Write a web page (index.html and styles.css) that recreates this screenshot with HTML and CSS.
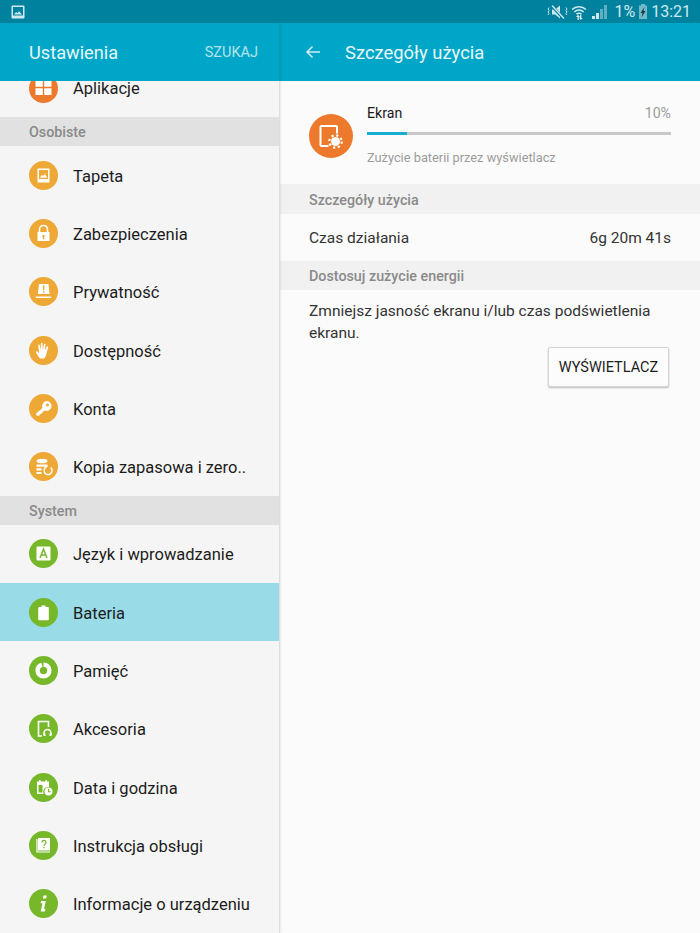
FILE: index.html
```html
<!DOCTYPE html>
<html lang="pl">
  <head>
    <meta charset="UTF-8" />
    <meta name="viewport" content="width=device-width, initial-scale=1.0" />
    <title>Ustawienia</title>
    <link rel="stylesheet" href="styles.css">
  </head>
  <body>
    <div class="status-bar">
      <svg class="status-pic" width="14" height="14" viewBox="0 0 14 14">
        <rect x="0.5" y="0.5" width="13" height="13" rx="1" fill="#cfe9ef" />
        <rect x="2" y="2" width="10" height="8.5" fill="#00829f" />
        <path d="M3 9.5l2.2-2.6 1.3 1.3 1.5-2 3 3.3z" fill="#cfe9ef" />
      </svg>
      <div class="status-right">
        <svg width="21" height="16" viewBox="0 0 21 16">
          <path d="M5 5.5h3.2L13 1.5v13L8.2 10.500H5z" fill="#cfe9ef" />
          <path d="M4 1l13 14" stroke="#00829f" stroke-width="3" />
          <path d="M5 1.500l12 13" stroke="#cfe9ef" stroke-width="1.400" />
          <path d="M2 3.500l-1 1.500 1 1.500-1 1.500 1 1.500-1 1.500M19 3.500l1 1.500-1 1.500 1 1.500-1 1.500 1 1.500" fill="none" stroke="#cfe9ef" stroke-width="1" />
        </svg>
        <svg class="wifi" width="16" height="16" viewBox="0 0 16 16">
          <path d="M1 5.500a10 10 0 0 1 14 0M3.300 8a6.800 6.800 0 0 1 9.400 0M5.500 10.300a3.500 3.500 0 0 1 5 0" fill="none" stroke="#cfe9ef" stroke-width="1.500" />
          <path d="M6.500 16v-3H5l2-2.300L9 13H7.800v3zM9.200 11h1.200v3h1.400l-2 2-1.300-1.500z" fill="#cfe9ef" />
        </svg>
        <svg class="signal" width="15" height="15" viewBox="0 0 15 15">
          <path d="M0 12h3v3H0zM4 9h3v6H4z" fill="#cfe9ef" />
          <path d="M8 5h3v10H8zM12 1h3v14h-3z" fill="#5fb0c2" />
        </svg>
        <span class="percent">1%</span>
        <svg class="batt" width="8" height="15" viewBox="0 0 8 15">
          <rect x="2" y="0" width="4" height="2" fill="#6fb9c9" />
          <rect x="0" y="1.500" width="8" height="13.500" fill="#6fb9c9" />
          <path d="M5.500 3L1.500 9h2L2.500 13.500 6.500 7h-2z" fill="#1c3a42" />
        </svg>
        <span class="clock">13:21</span>
      </div>
    </div>

    <div class="app">
      <aside class="sidebar">
        <header class="side-header">
          <span class="side-title">Ustawienia</span>
          <span class="side-search">SZUKAJ</span>
        </header>
        <div class="menu">
          <div class="row row-first">
            <span class="badge badge-orange">
              <svg viewBox="0 0 29 29"><path d="M6.500 6h7.300v6.800H6.500zM15.200 6h7.300v6.800h-7.300zM6.500 14.200h7.300V21H6.500zM15.200 14.200h7.300V21h-7.300z" fill="#fff" /></svg>
            </span>
            <span>Aplikacje</span>
          </div>
          <div class="group">Osobiste</div>
          <div class="row">
            <span class="badge badge-yellow">
              <svg viewBox="0 0 29 29"><path fill-rule="evenodd" d="M8.500 7.500h12v14h-12zM10 9v9h9V9z" fill="#fff" /><path d="M10.800 16.800l2.200-3 1.300 1.300 1.600-2 2.300 3.700z" fill="#fff" /></svg>
            </span>
            <span>Tapeta</span>
          </div>
          <div class="row">
            <span class="badge badge-yellow">
              <svg viewBox="0 0 29 29"><path d="M10.500 13v-2.500a4 4 0 0 1 8 0V13" fill="none" stroke="#fff" stroke-width="1.600" /><path fill-rule="evenodd" d="M8.500 13h12v9h-12zM14.500 16a1.200 1.200 0 0 0-.7 2.200V20h1.400v-1.800a1.200 1.200 0 0 0-.7-2.200z" fill="#fff" /></svg>
            </span>
            <span>Zabezpieczenia</span>
          </div>
          <div class="row">
            <span class="badge badge-yellow">
              <svg viewBox="0 0 29 29"><path fill-rule="evenodd" d="M10 7h9.500l1 10H8.800zM13.700 8.500l.3 4.800h1.200l.3-4.800zM13.900 14.200v1.600h1.400v-1.600z" fill="#fff" /><path d="M6.800 19.500h15.400V21H6.800z" fill="#fff" /></svg>
            </span>
            <span>Prywatność</span>
          </div>
          <div class="row">
            <span class="badge badge-yellow">
              <svg viewBox="0 0 29 29"><path d="M11 22.500c-1.500-1.500-2.500-3.500-4-6-.5-1 .7-1.800 1.500-1l1.700 2-1-8c-.1-1.100 1.300-1.300 1.500-.3l1 5 .2-6.700c0-1.100 1.600-1.100 1.600 0l.3 6.600 1.200-5.800c.2-1 1.700-.8 1.500.3l-.8 6.200 2-4c.5-1 1.800-.4 1.500.6l-2 7c-.5 1.800-1 3-2 4.100z" fill="#fff" /></svg>
            </span>
            <span>Dostępność</span>
          </div>
          <div class="row">
            <span class="badge badge-yellow">
              <svg viewBox="0 0 29 29"><path fill-rule="evenodd" d="M17.500 7a5 5 0 0 1 0 10c-.7 0-1.300-.1-1.900-.4L9.500 22 7.500 21.500 7 19.500l6.600-5.500A5 5 0 0 1 17.500 7zM18.500 9.500a1.500 1.500 0 1 0 0 3 1.500 1.500 0 0 0 0-3z" fill="#fff" /></svg>
            </span>
            <span>Konta</span>
          </div>
          <div class="row">
            <span class="badge badge-yellow">
              <svg viewBox="0 0 29 29"><ellipse cx="13" cy="9" rx="5.500" ry="2.300" fill="#fff" /><path d="M7.500 12.500h11v2.300h-11zM7.500 16.300h5v2.200h-5zM7.500 20h5v2h-5z" fill="#fff" /><path d="M21.800 15.600a4 4 0 1 1-3.500-1" fill="none" stroke="#fff" stroke-width="1.500" /></svg>
            </span>
            <span>Kopia zapasowa i zero..</span>
          </div>
          <div class="group">System</div>
          <div class="row">
            <span class="badge badge-green">
              <svg viewBox="0 0 29 29"><rect x="7.500" y="7.500" width="14" height="14" rx="1" fill="#fff" /><path d="M11 19l3.500-9 3.500 9M12.200 16h4.600" fill="none" stroke="#76b82a" stroke-width="1.500" /></svg>
            </span>
            <span>Język i wprowadzanie</span>
          </div>
          <div class="row row-active">
            <span class="badge badge-green">
              <svg viewBox="0 0 29 29"><path d="M12.500 7.500h4V9H19a.8.8 0 0 1 .8.8V21.500a.8.8 0 0 1-.8.8h-9a.8.8 0 0 1-.8-.8V9.800A.8.8 0 0 1 10 9h2.500z" fill="#fff" /></svg>
            </span>
            <span>Bateria</span>
          </div>
          <div class="row">
            <span class="badge badge-green">
              <svg viewBox="0 0 29 29"><circle cx="14.500" cy="14.500" r="5.900" fill="none" stroke="#fff" stroke-width="4.400" stroke-dasharray="34.500 2.600" transform="rotate(-90 14.500 14.500)" /></svg>
            </span>
            <span>Pamięć</span>
          </div>
          <div class="row">
            <span class="badge badge-green">
              <svg viewBox="0 0 29 29"><path d="M13 22H9.500V7.500h10V13" fill="none" stroke="#fff" stroke-width="1.600" /><path d="M15 21v-2a3.500 3.500 0 0 1 7 0v2" fill="none" stroke="#fff" stroke-width="1.500" /><path d="M14.500 19.500h2V22h-2zM20.500 19.500h2V22h-2z" fill="#fff" /></svg>
            </span>
            <span>Akcesoria</span>
          </div>
          <div class="row">
            <span class="badge badge-green">
              <svg viewBox="0 0 29 29"><path fill-rule="evenodd" d="M8 8.500h2V7h1.500v1.500h5V7H18v1.500h2V14a5 5 0 0 0-5.500 7H8zM9.500 12v7.500h4V12z" fill="#fff" /><circle cx="19.500" cy="18.500" r="4" fill="#fff" /><path d="M19.500 16v2.800h2.200" fill="none" stroke="#76b82a" stroke-width="1.100" /></svg>
            </span>
            <span>Data i godzina</span>
          </div>
          <div class="row">
            <span class="badge badge-green">
              <svg viewBox="0 0 29 29"><rect x="9" y="7" width="12" height="12.500" fill="#fff" /><path d="M8 8v13h13" fill="none" stroke="#fff" stroke-width="1.200" /><path d="M13 11.500a2 2 0 1 1 3 1.700c-.8.500-1 .9-1 1.700M15 16v1.300" fill="none" stroke="#76b82a" stroke-width="1.300" /></svg>
            </span>
            <span>Instrukcja obsługi</span>
          </div>
          <div class="row">
            <span class="badge badge-green">
              <svg viewBox="0 0 29 29"><path d="M14.500 6.500h3.300l-.6 3h-3.300zM12 12h4.800l-1.800 8h1.500l-.5 2.500h-4.300l1.800-8.200H11.600z" fill="#fff" /></svg>
            </span>
            <span>Informacje o urządzeniu</span>
          </div>
        </div>
      </aside>

      <main class="detail">
        <header class="detail-header">
          <svg class="back" width="16" height="14" viewBox="0 0 16 14">
            <path d="M15 7H2M7.500 1.500L2 7l5.500 5.500" fill="none" stroke="#cfeef5" stroke-width="1.500" />
          </svg>
          <span class="detail-title">Szczegóły użycia</span>
        </header>

        <div class="usage">
          <span class="usage-icon">
            <svg viewBox="0 0 44 44">
              <path d="M19.500 32h-7a1 1 0 0 1-1-1V13a1 1 0 0 1 1-1H27a1 1 0 0 1 1 1v6.500" fill="none" stroke="#fff" stroke-width="2" />
              <circle cx="26.500" cy="27.500" r="4.500" fill="#fff" />
              <circle cx="26.500" cy="27.500" r="6.200" fill="none" stroke="#fff" stroke-width="2.200" stroke-dasharray="2.200 2.670" />
            </svg>
          </span>
          <div class="usage-body">
            <div class="usage-top">
              <span class="usage-name">Ekran</span>
              <span class="usage-pct">10%</span>
            </div>
            <div class="bar"><div class="bar-fill" style="width: 13%"></div></div>
            <div class="usage-sub">Zużycie baterii przez wyświetlacz</div>
          </div>
        </div>

        <div class="section">Szczegóły użycia</div>
        <div class="time-row">
          <span>Czas działania</span>
          <span>6g 20m 41s</span>
        </div>
        <div class="section section-2">Dostosuj zużycie energii</div>
        <p class="tip">Zmniejsz jasność ekranu i/lub czas podświetlenia ekranu.</p>
        <div class="tip-action">
          <button class="screen-btn">WYŚWIETLACZ</button>
        </div>
      </main>
    </div>
  </body>
</html>
```

FILE: styles.css
```css
* {
  margin: 0;
  padding: 0;
  box-sizing: border-box;
  font-family: Roboto, "Liberation Sans", sans-serif;
}

html,
body {
  height: 933px;
  overflow: hidden;
}

.status-bar {
  height: 23px;
  background-color: #00829f;
  display: flex;
  justify-content: space-between;
  align-items: center;
  padding: 0 9px 0 11px;
  color: #cfe9ef;
}

.status-right {
  display: flex;
  align-items: center;
  height: 23px;
}

.wifi {
  margin-left: 3px;
}

.signal {
  margin-left: 5px;
  margin-top: -1px;
}

.percent {
  margin-left: 7px;
  font-size: 16px;
}

.batt {
  margin-left: 4px;
}

.clock {
  margin-left: 4px;
  font-size: 16px;
}

.app {
  display: flex;
  height: 910px;
}

.sidebar {
  width: 280px;
  background-color: #f5f5f5;
  box-shadow: 1px 0 2px rgba(0, 0, 0, 0.08);
  display: flex;
  flex-direction: column;
  position: relative;
}

.side-header {
  height: 58px;
  flex-shrink: 0;
  background-color: #00a6c7;
  border-right: 1px solid #009cbc;
  display: flex;
  justify-content: space-between;
  align-items: center;
  padding: 0 21px 0 29px;
  position: relative;
  z-index: 1;
}

.side-title {
  color: #e6f7fa;
  font-size: 18.200px;
}

.side-search {
  color: #b4e3ed;
  font-size: 14.500px;
}

.menu {
  flex: 1;
  border-right: 1px solid #dedede;
}

.row {
  height: 58.3px;
  display: flex;
  align-items: center;
  padding-left: 29px;
  gap: 15px;
  font-size: 16.500px;
  line-height: 20px;
  color: #1c1c1c;
}

.row > span:last-child {
  margin-top: 3px;
}

.row-first {
  height: 36px;
  padding-bottom: 22px;
  line-height: 14px;
}

.row-first > span:last-child {
  margin-top: 1px;
}

.row-active {
  background-color: #9adbe8;
}

.group {
  height: 29px;
  line-height: 30px;
  padding-left: 29px;
  background-color: #e1e1e1;
  color: #8a8a8a;
  font-size: 14.300px;
  font-weight: 500;
}

.badge {
  width: 29px;
  height: 29px;
  border-radius: 50%;
  flex-shrink: 0;
}

.badge svg {
  display: block;
  width: 29px;
  height: 29px;
}

.badge-orange {
  background-color: #ed7a2c;
}

.badge-yellow {
  background-color: #eda835;
}

.badge-green {
  background-color: #76b82a;
}

.detail {
  flex: 1;
  background-color: #fbfbfb;
}

.detail-header {
  height: 58px;
  background-color: #00a6c7;
  display: flex;
  align-items: center;
  padding-left: 25px;
}

.detail-title {
  margin-left: 24px;
  color: #e6f7fa;
  font-size: 18.400px;
}

.usage {
  height: 103px;
  display: flex;
  padding: 23px 29px 0;
}

.usage-icon {
  width: 44px;
  height: 44px;
  margin-top: 10px;
  border-radius: 50%;
  background-color: #ed7a2c;
  flex-shrink: 0;
}

.usage-icon svg {
  display: block;
}

.usage-body {
  flex: 1;
  margin-left: 14px;
}

.usage-top {
  display: flex;
  justify-content: space-between;
  font-size: 14.200px;
  line-height: 18px;
  color: #1c1c1c;
}

.usage-pct {
  color: #9c9c9c;
}

.bar {
  height: 3px;
  margin-top: 10px;
  background-color: #c8c8c8;
}

.bar-fill {
  height: 3px;
  background-color: #16add0;
}

.usage-sub {
  margin-top: 15px;
  font-size: 12.800px;
  color: #9c9c9c;
}

.section {
  height: 30px;
  line-height: 32px;
  padding-left: 29px;
  background-color: #f1f1f1;
  color: #8a8a8a;
  font-size: 14.300px;
  font-weight: 500;
}

.section-2 {
  height: 29px;
  line-height: 30px;
}

.time-row {
  height: 47px;
  display: flex;
  justify-content: space-between;
  align-items: center;
  padding: 0 29px;
  font-size: 15.500px;
  color: #333;
}

.tip {
  padding: 10px 29px 0;
  font-size: 15.500px;
  line-height: 22px;
  color: #333;
}

.tip-action {
  display: flex;
  justify-content: flex-end;
  padding: 3px 31px 0 0;
}

.screen-btn {
  width: 121px;
  height: 40px;
  background: #fcfcfc;
  border: 1px solid #d4d4d4;
  border-radius: 2px;
  box-shadow: 0 1px 2px rgba(0, 0, 0, 0.25);
  font-size: 14.500px;
  color: #1c1c1c;
}
```
